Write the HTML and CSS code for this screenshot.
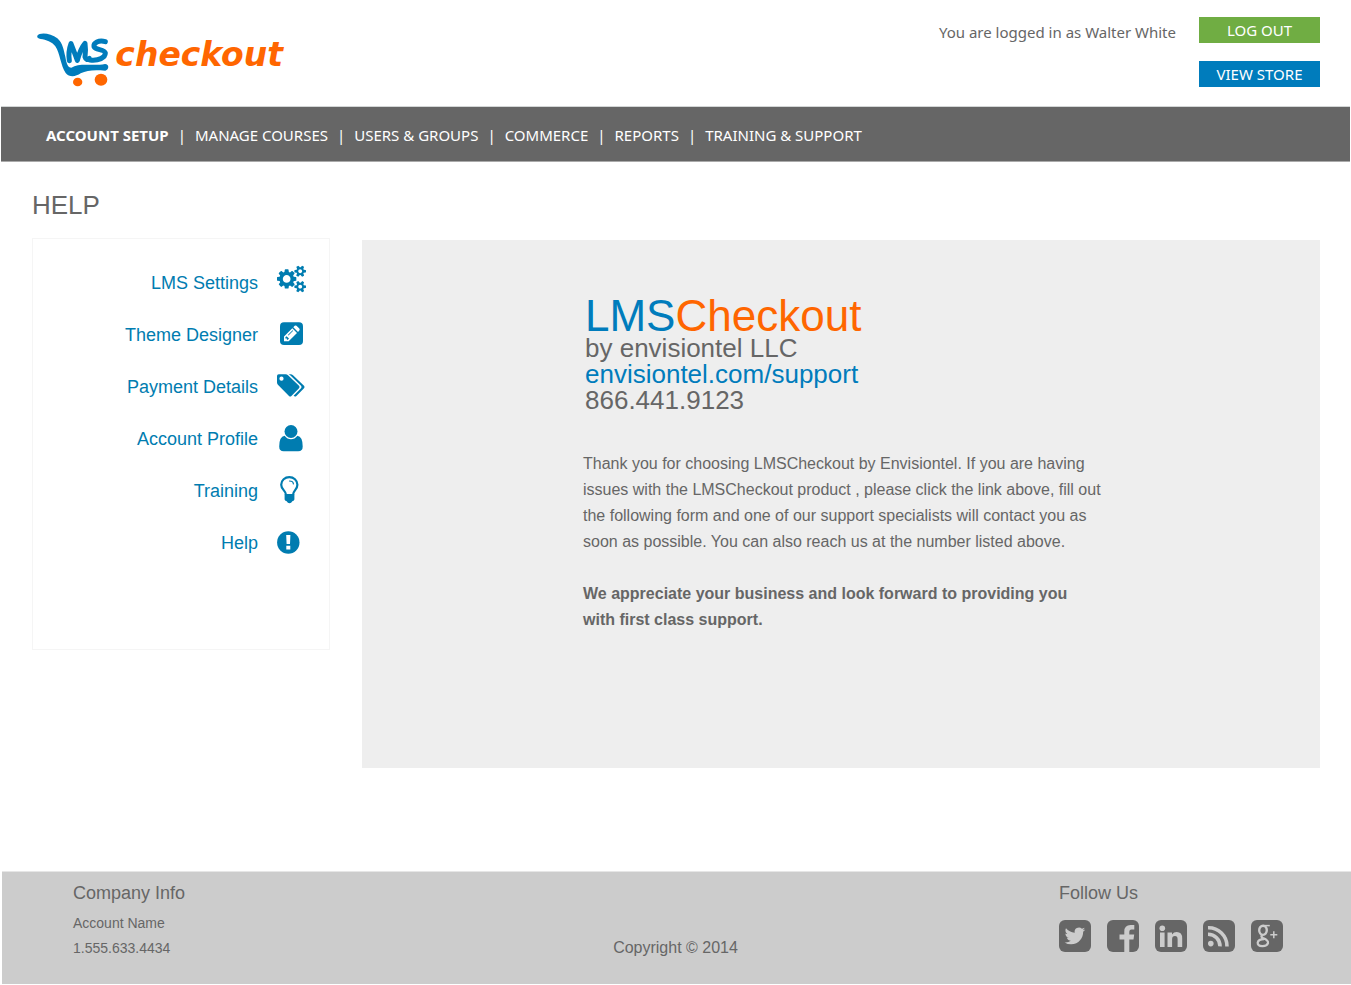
FILE: index.html
```html
<!DOCTYPE html>
<html lang="en">
<head>
<meta charset="utf-8">
<meta name="viewport" content="width=device-width, initial-scale=1">
<title>LMSCheckout - Help</title>
<link rel="stylesheet" href="styles.css">
</head>
<body>
<header class="header">
  <a class="logo" href="#" aria-label="LMS checkout">
    <svg class="logo-art" viewBox="0 0 795 210" aria-hidden="true">
      <path fill="#007cbc" d="M22 32C28 21 62 23 82 40C99 55 101 76 106 95C110 118 114 127 124 128C148 112 190 124 225 117C238 117 238 134 226 137C190 134 172 136 152 145C138 155 118 158 107 144C92 122 90 85 76 64C66 50 48 44 32 42C24 40 20 37 22 32Z"/>
      <path fill="none" stroke="#007cbc" stroke-width="15" stroke-linecap="round" stroke-linejoin="round" d="M118 107Q114 80 123 56Q130 74 142 106Q152 70 165 55Q168 74 165 96Q168 108 178 100M226 50C206 44 190 54 192 65C196 76 224 72 226 84C226 98 206 108 180 105"/>
      <ellipse fill="#ff6600" cx="143" cy="171" rx="14" ry="13"/>
      <ellipse fill="#ff6600" cx="213" cy="164" rx="19" ry="18"/>
      <text class="logo-word" x="256" y="123">checkout</text>
    </svg>
  </a>
  <div class="account">
    <p class="account-text">You are logged in as Walter White</p>
    <div class="account-actions">
      <button class="btn btn-green" type="button">LOG OUT</button>
      <button class="btn btn-blue" type="button">VIEW STORE</button>
    </div>
  </div>
</header>

<nav class="nav" aria-label="Main">
  <ul class="nav-list">
    <li><a class="is-active" href="#">ACCOUNT SETUP</a></li>
    <li><a href="#">MANAGE COURSES</a></li>
    <li><a href="#">USERS &amp; GROUPS</a></li>
    <li><a href="#">COMMERCE</a></li>
    <li><a href="#">REPORTS</a></li>
    <li><a href="#">TRAINING &amp; SUPPORT</a></li>
  </ul>
</nav>

<main class="main">
  <h1 class="page-title">HELP</h1>
  <div class="columns">
    <aside class="side">
      <ul class="side-list">
        <li><a href="#">LMS Settings
          <svg class="side-icon" viewBox="0 0 30 36" aria-hidden="true"><path transform="translate(0 .4) scale(.0151)" d="M896 896q0-106-75-181t-181-75-181 75-75 181 75 181 181 75 181-75 75-181zm768 512q0-52-38-90t-90-38-90 38-38 90q0 53 37.500 90.500t90.500 37.500 90.500-37.500 37.500-90.500zm0-1024q0-52-38-90t-90-38-90 38-38 90q0 53 37.500 90.500t90.500 37.500 90.500-37.500 37.500-90.500zm-384 421v185q0 10-7 19.500t-16 10.500l-155 24q-11 35-32 76 34 48 90 115 7 11 7 20 0 12-7 19-23 30-82.500 89.500t-78.500 59.500q-11 0-21-7l-115-90q-37 19-77 31-11 108-23 155-7 24-30 24h-186q-11 0-20-7.500t-10-17.500l-23-153q-34-10-75-31l-118 89q-7 7-20 7-11 0-21-8-144-133-144-160 0-9 7-19 10-14 41-53t47-61q-23-44-35-82l-152-24q-10-1-17-9.500t-7-19.500v-185q0-10 7-19.500t16-10.500l155-24q11-35 32-76-34-48-90-115-7-11-7-20 0-12 7-20 22-30 82-89t79-59q11 0 21 7l115 90q34-18 77-32 11-108 23-154 7-24 30-24h186q11 0 20 7.500t10 17.500l23 153q34 10 75 31l118-89q8-7 20-7 11 0 21 8 144 133 144 160 0 8-7 19-12 16-42 54t-45 60q23 48 34 82l152 23q10 2 17 10.500t7 19.500zm640 533v140q0 16-149 31-12 27-30 52 51 113 51 138 0 4-4 7-122 71-124 71-8 0-46-47t-52-68q-20 2-30 2t-30-2q-14 21-52 68t-46 47q-2 0-124-71-4-3-4-7 0-25 51-138-18-25-30-52-149-15-149-31v-140q0-16 149-31 13-29 30-52-51-113-51-138 0-4 4-7 4-2 35-20t59-34 30-16q8 0 46 46.500t52 67.500q20-2 30-2t30 2q51-71 92-112l6-2q4 0 124 70 4 3 4 7 0 25-51 138 17 23 30 52 149 15 149 31zm0-1024v140q0 16-149 31-12 27-30 52 51 113 51 138 0 4-4 7-122 71-124 71-8 0-46-47t-52-68q-20 2-30 2t-30-2q-14 21-52 68t-46 47q-2 0-124-71-4-3-4-7 0-25 51-138-18-25-30-52-149-15-149-31v-140q0-16 149-31 13-29 30-52-51-113-51-138 0-4 4-7 4-2 35-20t59-34 30-16q8 0 46 46.500t52 67.500q20-2 30-2t30 2q51-71 92-112l6-2q4 0 124 70 4 3 4 7 0 25-51 138 17 23 30 52 149 15 149 31z"/></svg></a></li>
        <li><a href="#">Theme Designer
          <svg class="side-icon" viewBox="0 0 30 36" aria-hidden="true"><rect x="3" y="5.300" width="23" height="22.700" rx="4"/><path fill="#fff" d="M7 19.500L15.300 11.200L20 15.900L11.700 24.200H7ZM16.300 10.200L17.700 8.800Q18.600 8 19.500 8.800L22.300 11.600Q23.200 12.600 22.300 13.500L21 14.900Z"/><path d="M8.400 20.300L9.600 19.200L12 21.600L10.900 22.800H9.900V21.400H8.400ZM10.900 17.900L15.600 13.200L16.200 13.800L11.500 18.500Z"/></svg></a></li>
        <li><a href="#">Payment Details
          <svg class="side-icon" viewBox="0 0 30 36" aria-hidden="true"><path fill-rule="evenodd" d="M0 7Q0 5.300 1.700 5.300H8.500Q10 5.300 11.300 6.500L22 16.700Q23.200 18 22 19.300L14.400 27Q13.200 28 12 27L1.400 16.300Q0 15 0 13.500ZM4.500 7.600A2.100 2.100 0 1 0 4.500 11.800A2.100 2.100 0 1 0 4.500 7.600Z"/><path d="M11.700 5.300H13.500Q15 5.300 16.300 6.500L27 16.700Q28.200 18 27 19.300L19.400 27Q17.900 28.200 16.600 26.700L24 19.300Q25.200 18 24 16.700L14 7Q12.900 5.900 11.700 5.300Z"/></svg></a></li>
        <li><a href="#">Account Profile
          <svg class="side-icon" viewBox="0 0 30 36" aria-hidden="true"><ellipse cx="14" cy="10.500" rx="6.500" ry="6.500"/><path d="M7.600 14.700Q10.300 18.200 14 18.200T20.400 14.700Q25.700 15.500 25.700 25.500Q25.700 30.300 21.200 30.300H6.600Q2.200 30.300 2.200 25.500Q2.200 15.500 7.600 14.700Z"/></svg></a></li>
        <li><a href="#">Training
          <svg class="side-icon" viewBox="0 0 30 36" aria-hidden="true"><path fill="none" stroke="#007cb0" stroke-width="2.200" d="M8.900 21.500C8.700 17.500 4.200 16.500 4.200 11.800C4.200 7.200 8 4.200 12.300 4.200S20.400 7.200 20.400 11.800C20.400 16.500 16.300 17.500 16.100 21.500"/><path d="M7.600 21H17.400V26.500Q16.800 27.900 15.300 28.300Q14.300 30.300 12.500 30.300T9.700 28.300Q8.200 27.900 7.600 26.500Z"/><path fill="none" stroke="#007cb0" stroke-width="1.200" stroke-linecap="round" d="M12.500 8Q16 8 16.400 10.800"/></svg></a></li>
        <li><a href="#">Help
          <svg class="side-icon" viewBox="0 0 30 36" aria-hidden="true"><circle cx="11.300" cy="17.500" r="11.200"/><path fill="#fff" d="M9.200 10H13.400L13 19H9.600ZM9.300 20.800H13.300V24.500H9.300Z"/></svg></a></li>
      </ul>
    </aside>
    <section class="panel">
      <div class="panel-body">
        <div class="contact">
          <h2 class="brand">LMS<span class="brand-accent">Checkout</span></h2>
          <p>by envisiontel LLC</p>
          <p><a href="#">envisiontel.com/support</a></p>
          <p>866.441.9123</p>
        </div>
        <p class="message">Thank you for choosing LMSCheckout by Envisiontel. If you are having issues with the LMSCheckout product , please click the link above, fill out the following form and one of our support specialists will contact you as soon as possible. You can also reach us at the number listed above.</p>
        <p class="message message-strong">We appreciate your business and look forward to providing you with first class support.</p>
      </div>
    </section>
  </div>
</main>

<footer class="footer">
  <div class="company">
    <h2 class="footer-title">Company Info</h2>
    <p>Account Name</p>
    <p>1.555.633.4434</p>
  </div>
  <p class="copyright">Copyright © 2014</p>
  <div class="follow">
    <h2 class="footer-title">Follow Us</h2>
    <ul class="social">
      <li><a href="#" aria-label="Twitter"><svg viewBox="0 0 32 32" aria-hidden="true"><rect width="32" height="32" rx="6"/><path fill="#ccc" transform="translate(5.600 5.600) scale(.86)" d="M23.953 4.570a10 10 0 01-2.825.775 4.958 4.958 0 002.163-2.723c-.951.555-2.005.959-3.127 1.184a4.920 4.920 0 00-8.384 4.482C7.690 8.095 4.067 6.130 1.640 3.162a4.822 4.822 0 00-.666 2.475c0 1.710.870 3.213 2.188 4.096a4.904 4.904 0 01-2.228-.616v.060a4.923 4.923 0 003.946 4.827 4.996 4.996 0 01-2.212.085 4.936 4.936 0 004.604 3.417 9.867 9.867 0 01-6.102 2.105c-.390 0-.779-.023-1.170-.067a13.995 13.995 0 007.557 2.209c9.053 0 13.998-7.496 13.998-13.985 0-.210 0-.420-.015-.630A9.935 9.935 0 0024 4.590z"/></svg></a></li>
      <li><a href="#" aria-label="Facebook"><svg viewBox="0 0 32 32" aria-hidden="true"><rect width="32" height="32" rx="6"/><path fill="#ccc" d="M17.300 32V19.500H12.500V14.600H17.300V11.500Q17.300 5 23.500 5H27.300V9.600H24.500Q22.300 9.600 22.300 11.800V14.600H27.200L26.500 19.500H22.300V32Z"/></svg></a></li>
      <li><a href="#" aria-label="LinkedIn"><svg viewBox="0 0 32 32" aria-hidden="true"><rect width="32" height="32" rx="6"/><g fill="#ccc"><circle cx="7.300" cy="8.300" r="2.800"/><path d="M5 12.500H9.600V27H5ZM12.500 12.500H17V14.500Q18.700 12.100 21.700 12.100Q27.200 12.100 27.200 18.500V27H22.600V19.300Q22.600 16 20 16Q17.100 16 17.100 19.300V27H12.500Z"/></g></svg></a></li>
      <li><a href="#" aria-label="RSS"><svg viewBox="0 0 32 32" aria-hidden="true"><rect width="32" height="32" rx="6"/><circle fill="#ccc" cx="7.800" cy="23.600" r="2.800"/><path fill="none" stroke="#ccc" stroke-width="3.600" d="M5 14.200A12 12 0 0 1 17 26.400M5 7.700A18.500 18.500 0 0 1 24 26.400"/></svg></a></li>
      <li><a href="#" aria-label="Google Plus"><svg viewBox="0 0 32 32" aria-hidden="true"><rect width="32" height="32" rx="6"/><g fill="none" stroke="#ccc"><ellipse cx="12" cy="10.300" rx="3.800" ry="4.600" stroke-width="2.400"/><path stroke-width="1.500" d="M12 5.600H18.800"/><path stroke-width="2.200" d="M11.500 15Q9 16.500 12 18Q17.600 20.200 17 23.200Q15.800 26.400 11.200 26.200Q6.400 25.800 6.700 22.500Q7.500 19.300 13 19.200"/><path stroke-width="1.500" d="M19.300 14.800H26.300M22.800 11.300V18.300"/></g></svg></a></li>
    </ul>
  </div>
</footer>
</body>
</html>
```
FILE: styles.css
```css
* {
  box-sizing: border-box;
}

body,
h1,
h2,
p,
ul {
  margin: 0;
  padding: 0;
}

ul {
  list-style: none;
}

body {
  background: #fff;
  color: #666;
  font-family: "Liberation Sans", Arial, sans-serif;
}

a {
  color: inherit;
  text-decoration: none;
}

svg {
  display: block;
}

.header {
  display: flex;
  justify-content: space-between;
  align-items: flex-start;
  min-height: 106px;
  padding: 17px 31px 8px 30px;
}

.logo {
  padding-top: 8px;
}

.logo-art {
  width: 265px;
  height: 70px;
}

.logo-word {
  fill: #ff6600;
  font: italic bold 99px "DejaVu Sans", Verdana, sans-serif;
}

.account {
  display: flex;
  gap: 23px;
  font-family: "Noto Sans", sans-serif;
  font-size: 15px;
}

.account-text {
  line-height: 30px;
}

.account-actions {
  display: flex;
  flex-direction: column;
  gap: 18px;
}

.btn {
  width: 121px;
  height: 26px;
  padding: 0;
  border: 0;
  color: #fff;
  font: inherit;
  line-height: 26px;
  cursor: pointer;
}

.btn-green {
  background: #70ad43;
}

.btn-blue {
  background: #007cbc;
}

.nav {
  margin: 0 1px;
  padding: 2px 45px 0;
  border-top: 1px solid #d3d6d6;
  border-bottom: 1px solid #aaa;
  background: #666;
  color: #fff;
  font-family: "Noto Sans", sans-serif;
  font-size: 15px;
  line-height: 52px;
}

.nav-list {
  display: flex;
  flex-wrap: wrap;
}

.nav-list li + li::before {
  content: "|";
  padding: 0 9px;
}

.is-active {
  font-weight: bold;
}

.main {
  padding: 26px 31px 103px 32px;
}

.page-title {
  font-size: 26px;
  font-weight: normal;
  line-height: 34px;
}

.columns {
  display: grid;
  grid-template-columns: 298px 1fr;
  align-items: start;
  gap: 32px;
  padding-top: 16px;
}

.side {
  min-height: 412px;
  padding: 18px 22px;
  border: 1px solid #f5f5f5;
}

.side-list a {
  display: flex;
  justify-content: flex-end;
  align-items: center;
  gap: 19px;
  height: 52px;
  color: #007cb0;
  font-size: 18px;
}

.side-icon {
  width: 30px;
  height: 36px;
  fill: #007cb0;
}

.panel {
  min-height: 528px;
  margin-top: 2px;
  padding: 57px 24px;
  background: #eee;
}

.panel-body {
  max-width: 522px;
  margin: 0 auto;
  padding-left: 3px;
}

.contact {
  padding: 0 0 38px 2px;
  font-size: 26px;
  line-height: 26px;
}

.contact a,
.brand {
  color: #007cbc;
}

.brand {
  font-size: 44px;
  font-weight: normal;
  line-height: 38px;
}

.brand-accent {
  color: #ff6600;
}

.message {
  font-size: 16px;
  line-height: 26px;
}

.message-strong {
  padding-top: 26px;
  font-weight: bold;
}

.footer {
  display: grid;
  grid-template-columns: 1fr auto 1fr;
  margin-left: 2px;
  padding: 9px 68px 20px 71px;
  border-top: 1px solid #e6e6e6;
  background: #ccc;
}

.footer-title {
  font-size: 18px;
  font-weight: normal;
  line-height: 24px;
}

.company {
  padding-bottom: 3px;
  font-size: 14px;
  line-height: 25px;
}

.company .footer-title {
  padding-bottom: 6px;
}

.copyright {
  align-self: end;
  padding-right: 5px;
  font-size: 16px;
  line-height: 32px;
}

.follow {
  justify-self: end;
}

.social {
  display: flex;
  gap: 16px;
  padding-top: 15px;
}

.social svg {
  width: 32px;
  height: 32px;
  fill: #666;
}
```
